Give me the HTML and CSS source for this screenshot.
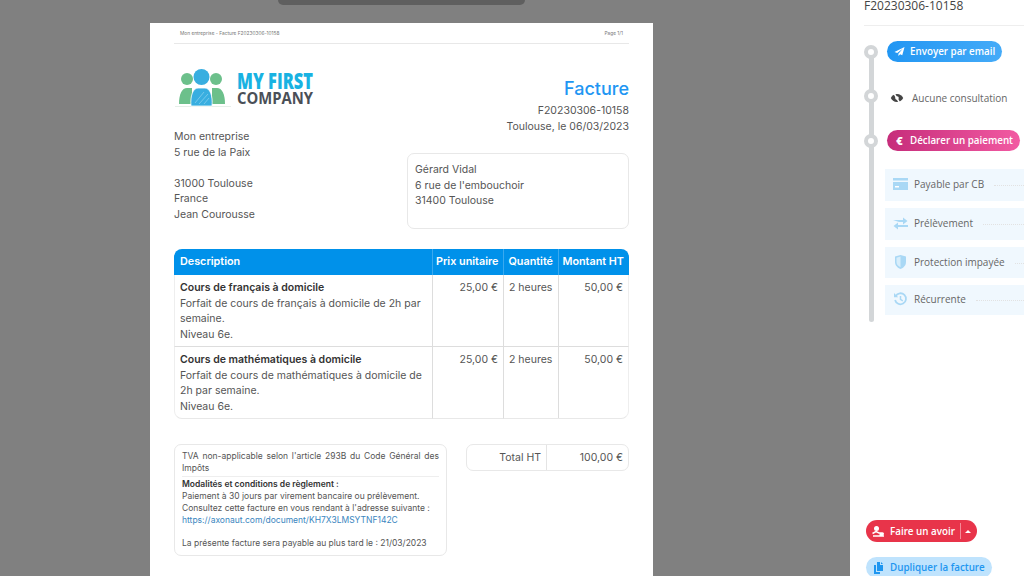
FILE: index.html
```html
<!DOCTYPE html>
<html lang="fr">
<head>
  <meta charset="UTF-8">
  <meta name="viewport" content="width=device-width, initial-scale=1.0">
  <title>Facture F20230306-10158</title>
  <link rel="stylesheet" href="styles.css">
</head>
<body>
  <main class="viewer">
    <div class="toolbar"></div>
    <article class="page">
      <header class="page-head">
        <span>Mon entreprise - Facture F20230306-10158</span>
        <span>Page 1/1</span>
      </header>

      <section class="top">
        <div class="seller">
          <svg class="logo" width="180" height="45" viewBox="0 0 180 45">
            <path d="M1 41.500h56" stroke="#e6efe9" stroke-width="1"/>
            <circle cx="13" cy="14" r="6" fill="#6cc08b"/>
            <circle cx="42" cy="14" r="6" fill="#6cc08b"/>
            <path d="M5 39c0-10 3-16 8-16h5v16z" fill="#6cc08b"/>
            <path d="M51 39c0-10-3-16-8-16h-5v16z" fill="#6cc08b"/>
            <circle cx="27.500" cy="12" r="8" fill="#38aee0"/>
            <path d="M17 41c-1-10 2-18 7-18h7c5 0 8 8 7 18z" fill="#38aee0" stroke="#fff" stroke-width=".8"/>
            <path d="M21 38l9-11M25 39l9-10M30 39l5-6" stroke="#8fd3ef" stroke-width=".7"/>
            <text class="logo-first" x="63" y="24" textLength="76" lengthAdjust="spacingAndGlyphs">MY FIRST</text>
            <text class="logo-company" x="63" y="39" textLength="76" lengthAdjust="spacingAndGlyphs">COMPANY</text>
          </svg>
          <address class="seller-address">
            Mon entreprise<br>
            5 rue de la Paix<br>
            <br>
            31000 Toulouse<br>
            France<br>
            Jean Courousse
          </address>
        </div>
        <div class="doc-info">
          <h1>Facture</h1>
          <p>F20230306-10158<br>Toulouse, le 06/03/2023</p>
          <address class="client">
            Gérard Vidal<br>
            6 rue de l'embouchoir<br>
            31400 Toulouse
          </address>
        </div>
      </section>

      <table class="lines">
        <thead>
          <tr>
            <th class="col-desc">Description</th>
            <th class="col-price">Prix unitaire</th>
            <th class="col-qty">Quantité</th>
            <th class="col-total">Montant HT</th>
          </tr>
        </thead>
        <tbody>
          <tr>
            <td><strong>Cours de français à domicile</strong><br>Forfait de cours de français à domicile de 2h par semaine.<br>Niveau 6e.</td>
            <td class="num">25,00 €</td>
            <td class="qty">2 heures</td>
            <td class="num">50,00 €</td>
          </tr>
          <tr>
            <td><strong>Cours de mathématiques à domicile</strong><br>Forfait de cours de mathématiques à domicile de 2h par semaine.<br>Niveau 6e.</td>
            <td class="num">25,00 €</td>
            <td class="qty">2 heures</td>
            <td class="num">50,00 €</td>
          </tr>
        </tbody>
      </table>

      <section class="bottom">
        <div class="notes">
          <p class="vat">TVA non-applicable selon l'article 293B du Code Général des Impôts</p>
          <p><strong>Modalités et conditions de règlement :</strong><br>
            Paiement à 30 jours par virement bancaire ou prélèvement.<br>
            Consultez cette facture en vous rendant à l'adresse suivante :<br>
            <a href="#">https://axonaut.com/document/KH7X3LMSYTNF142C</a><br>
            <br>
            La présente facture sera payable au plus tard le : 21/03/2023</p>
        </div>
        <div class="totals">
          <span class="totals-label">Total HT</span>
          <span class="totals-value">100,00 €</span>
        </div>
      </section>
    </article>
  </main>

  <aside class="sidebar">
    <div class="doc-ref">F20230306-10158</div>
    <div class="timeline">
      <div class="step step-email">
        <span class="dot"></span>
        <a class="pill pill-blue" href="#">
          <svg width="11" height="11" viewBox="0 0 12 12"><path d="M11.500 1 .5 6.500l3 1.200 6-4.700-4.700 5.400v2.600l1.900-1.900 2.300 1.100z" fill="#fff"/></svg>
          Envoyer par email
        </a>
      </div>
      <div class="step step-seen">
        <span class="dot"></span>
        <span class="seen">
          <svg width="14" height="12" viewBox="0 0 14 12"><path d="M7 2C4 2 1.800 4 .8 6c1 2 3.200 4 6.200 4 3 0 5.200-2 6.200-4-1-2-3.200-4-6.200-4z" fill="#444"/><path d="M3.500 .5 10 11.500" stroke="#fff" stroke-width="1.500"/><path d="M7 4.200a1.800 1.800 0 1 0 0 3.600 1.800 1.800 0 0 0 0-3.600z" fill="#fff"/></svg>
          Aucune consultation
        </span>
      </div>
      <div class="step step-pay">
        <span class="dot"></span>
        <a class="pill pill-pink" href="#"><b class="euro">€</b> Déclarer un paiement</a>
      </div>
      <ul class="pay-options">
        <li>
          <svg width="15" height="12" viewBox="0 0 15 12"><path d="M0 0h15v2.500H0z" fill="#a9d8f5"/><path d="M0 4h15v8H0z" fill="#a9d8f5"/><path d="M2 8h4v1.500H2z" fill="#fff"/></svg>
          <span>Payable par CB</span><i></i>
        </li>
        <li>
          <svg width="15" height="13" viewBox="0 0 15 13"><path d="M0 3h10V.5L14.500 4 10 7.500V5H6z" fill="#a9d8f5"/><path d="M15 8H5V5.500L.5 9 5 12.500V10h10z" fill="#a9d8f5"/></svg>
          <span>Prélèvement</span><i></i>
        </li>
        <li>
          <svg width="15" height="14" viewBox="0 0 15 14"><path d="M2 1.500 7.500 0 13 1.500V7c0 3.500-2.500 5.800-5.500 7C4.500 12.800 2 10.500 2 7z" fill="#a9d8f5"/><path d="M7.500 1.500V12.300C5.300 11.200 3.500 9.500 3.500 7V2.700z" fill="#d8eefb"/></svg>
          <span>Protection impayée</span><i></i>
        </li>
        <li>
          <svg width="15" height="14" viewBox="0 0 14 14"><path d="M2.200 4A5.500 5.500 0 1 1 1.600 8" fill="none" stroke="#a9d8f5" stroke-width="1.800"/><path d="M.5 1v4.200h4.200z" fill="#a9d8f5"/><path d="M7 4v3.300l2.300 1.500" fill="none" stroke="#a9d8f5" stroke-width="1.500"/></svg>
          <span>Récurrente</span><i></i>
        </li>
      </ul>
    </div>

    <div class="actions">
      <div class="pill pill-red">
        <svg width="13" height="12" viewBox="0 0 13 12"><path d="M4.500 1a2.500 2.500 0 1 1 0 5 2.500 2.500 0 0 1 0-5z" fill="#fff"/><path d="M.5 8.500 4 6.500l3 1.500h3.500c1 0 1 1.500 0 1.500H7.500M1 11h11" fill="none" stroke="#fff" stroke-width="1.500"/></svg>
        <span>Faire un avoir</span>
        <span class="caret"></span>
      </div>
      <a class="pill pill-light" href="#">
        <svg width="12" height="12" viewBox="0 0 12 12"><path d="M4 0h3v3h3v6H4z" fill="#1e96f0"/><path d="M8 0l2 2H8zM1 3h2v7h4v2H1z" fill="#1e96f0"/></svg>
        Dupliquer la facture
      </a>
    </div>
  </aside>
</body>
</html>
```

FILE: styles.css
```css
* {
  box-sizing: border-box;
}
html, body {
  height: 100%;
}
body {
  margin: 0;
  display: flex;
  height: 576px;
  overflow: hidden;
  font-family: Inter, "Liberation Sans", sans-serif;
  color: #555;
  background: #808080;
}

/* document viewer */
.viewer {
  width: 850px;
  flex: none;
  padding-left: 150px;
  background: #808080;
  overflow: hidden;
}
.toolbar {
  width: 247px;
  height: 5px;
  margin: 0 0 18px 128px;
  background: #5f5f5f;
  border-radius: 0 0 8px 8px;
}
.page {
  width: 503px;
  height: 700px;
  padding: 0 24px;
  background: #fff;
}
.page-head {
  display: flex;
  justify-content: space-between;
  height: 21px;
  padding: 6px 6px 0;
  border-bottom: 1px solid #e8e8e8;
  font-size: 4.800px;
  line-height: 8px;
  color: #777;
}

.top {
  display: flex;
  justify-content: space-between;
  font-size: 10.500px;
  line-height: 15.500px;
}
.seller {
  padding-top: 21px;
}
.logo {
  display: block;
  margin-bottom: 19px;
}
.logo-first {
  font: 800 22px "Open Sans", sans-serif;
  fill: #18b2e2;
}
.logo-company {
  font: 700 16.500px "Open Sans", sans-serif;
  fill: #4a4f57;
}
address {
  font-style: normal;
}
.doc-info {
  width: 222px;
  padding-top: 33px;
  text-align: right;
}
.doc-info h1 {
  margin: 0;
  font-size: 18px;
  line-height: 24px;
  font-weight: 500;
  color: #2196f3;
}
.doc-info p {
  margin: 2px 0 0;
}
.client {
  height: 76px;
  margin-top: 19px;
  padding: 8px 7px;
  border: 1px solid #e8e8e8;
  border-radius: 7px;
  text-align: left;
}

/* invoice lines */
.lines {
  width: 455px;
  margin-top: 20px;
  border-collapse: separate;
  border-spacing: 0;
  table-layout: fixed;
  font-size: 10.500px;
  line-height: 15.500px;
}
.lines th {
  height: 26px;
  padding: 0 5px 0 3px;
  background: #0091ea;
  color: #fff;
  font-size: 10.800px;
  font-weight: 600;
  text-align: right;
  border-left: 1px solid #3aa9ef;
  white-space: nowrap;
}
.lines th.col-desc {
  width: 258px;
  padding-left: 6px;
  text-align: left;
  border-left: 0;
  border-radius: 8px 0 0 0;
}
.col-price { width: 71px; }
.col-qty { width: 55px; }
.lines th.col-total {
  width: 71px;
  border-radius: 0 8px 0 0;
}
.lines td {
  height: 72px;
  padding: 5px 5px 4px;
  vertical-align: top;
  border-left: 1px solid #ddd;
  border-bottom: 1px solid #ddd;
}
.lines td:first-child {
  border-left: 1px solid #eee;
}
.lines td:last-child {
  border-right: 1px solid #eee;
}
.lines tbody tr:last-child td {
  border-bottom-color: #e8e8e8;
}
.lines tbody tr:last-child td:first-child {
  border-radius: 0 0 0 8px;
}
.lines tbody tr:last-child td:last-child {
  border-radius: 0 0 8px 0;
}
.lines strong {
  color: #333;
  font-weight: 600;
}
.num {
  text-align: right;
}
.qty {
  white-space: nowrap;
}

/* notes and totals */
.bottom {
  display: flex;
  justify-content: space-between;
  align-items: flex-start;
  margin-top: 25px;
}
.notes {
  width: 273px;
  height: 112px;
  padding: 6px 7px;
  border: 1px solid #e8e8e8;
  border-radius: 7px;
  font-size: 8.500px;
  line-height: 11.700px;
}
.notes p {
  margin: 0;
}
.notes strong {
  color: #333;
  font-weight: 600;
}
.notes a {
  color: #3a86c0;
  text-decoration: none;
}
.vat {
  text-align: justify;
  padding-bottom: 2px;
  margin-bottom: 2px !important;
  border-bottom: 1px solid #eee;
}
.totals {
  display: flex;
  width: 163px;
  height: 27px;
  border: 1px solid #e8e8e8;
  border-radius: 7px;
  font-size: 10.500px;
  line-height: 25px;
  text-align: right;
}
.totals-label {
  width: 80px;
  padding-right: 5px;
  border-right: 1px solid #e4e4e4;
}
.totals-value {
  flex: 1;
  padding-right: 5px;
}

/* right panel */
.sidebar {
  flex: 1;
  display: flex;
  flex-direction: column;
  padding-left: 14px;
  background: #fff;
  font-family: "Open Sans", sans-serif;
  overflow: hidden;
}
.doc-ref {
  height: 28px;
  margin-top: -2px;
  border-bottom: 1px solid #eee;
  font-size: 12px;
  line-height: 16px;
  color: #444;
  white-space: nowrap;
}
.timeline {
  position: relative;
  width: 160px;
  margin-top: 15px;
}
.timeline::before {
  content: "";
  position: absolute;
  left: 5px;
  top: 8px;
  width: 5px;
  height: 273px;
  background: #d3d6d8;
  border-radius: 3px;
}
.step {
  position: relative;
  display: flex;
  align-items: center;
  gap: 9px;
  height: 21px;
}
.step-seen {
  margin-top: 23px;
}
.step-pay {
  margin-top: 24px;
}
.dot {
  flex: none;
  width: 14px;
  height: 14px;
  border: 4px solid #d3d6d8;
  border-radius: 50%;
  background: #fff;
}
.pill {
  display: inline-flex;
  align-items: center;
  gap: 5px;
  height: 21px;
  padding: 0 7px;
  border-radius: 11px;
  font-size: 9.800px;
  font-weight: 600;
  color: #fff;
  text-decoration: none;
  white-space: nowrap;
}
.pill-blue {
  background: linear-gradient(90deg, #2196f3, #45abf8);
}
.pill-pink {
  background: linear-gradient(90deg, #c62d7b, #f25aa2);
}
.euro {
  width: 11px;
  text-align: center;
  font-size: 11px;
}
.seen {
  display: flex;
  align-items: center;
  gap: 8px;
  padding: 5px 0 0 3px;
  font-size: 10px;
  color: #666;
  white-space: nowrap;
}
.pay-options {
  list-style: none;
  width: 139px;
  margin: 18px 0 0 21px;
  padding: 0;
  display: flex;
  flex-direction: column;
  gap: 7px;
}
.pay-options li {
  display: flex;
  align-items: center;
  height: 32px;
  padding: 0 0 2px 8px;
  background: #f0f8fe;
  font-size: 10px;
  color: #666;
  white-space: nowrap;
}
.pay-options li:nth-child(3) {
  height: 31px;
}
.pay-options li:nth-child(4) {
  height: 30px;
}
.pay-options svg {
  flex: none;
  margin-right: 6px;
}
.pay-options i {
  flex: 1;
  margin: 3px 0 0 10px;
  border-bottom: 1px dotted #e2e2e2;
}

.actions {
  margin-top: auto;
  display: flex;
  flex-direction: column;
  align-items: flex-start;
  gap: 15px;
  margin-bottom: -2px;
  margin-left: 2px;
}
.pill-red {
  gap: 5px;
  height: 22px;
  padding-left: 6px;
  background: #e8344a;
}
.caret {
  display: flex;
  align-items: center;
  justify-content: center;
  width: 16px;
  height: 16px;
  margin-right: -6px;
  border-left: 1px solid #f58a97;
}
.caret::after {
  content: "";
  border: 3px solid transparent;
  border-top: 0;
  border-bottom-color: #fff;
}
.pill-light {
  background: #bfe3fd;
  color: #1e96f0;
}
```
